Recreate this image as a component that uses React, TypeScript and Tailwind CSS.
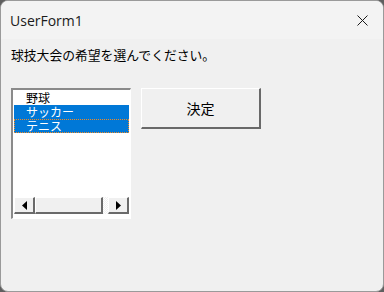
import React from 'react'

const jp = { fontFamily: '"Noto Sans CJK JP", "Noto Sans", sans-serif' }

function Arrow({ dir }: { dir: 'left' | 'right' }) {
  return (
    <svg width="5" height="9" viewBox="0 0 5 9">
      {dir === 'left' ? (
        <path d="M5 0 L0 4.5 L5 9 Z" fill="#000" />
      ) : (
        <path d="M0 0 L5 4.5 L0 9 Z" fill="#000" />
      )}
    </svg>
  )
}

export default function App() {
  const items = ['野球', 'サッカー', 'テニス']
  const selected = [false, true, true]

  return (
    <div className="w-[384px] h-[292px] bg-[#5f5f5f]">
      <div className="w-full h-full rounded-[8px] border border-[#9a9a9a] bg-[#f0f0f0] overflow-hidden flex flex-col">
        {/* title bar */}
        <div className="h-[38px] shrink-0 bg-[#f3f3f3] flex items-center justify-between pl-[9px] pr-[12px]">
          <span className="text-[14px] text-[#1a1a1a]" style={{ fontFamily: '"Open Sans", "Noto Sans", sans-serif' }}>
            UserForm1
          </span>
          <svg width="11" height="11" viewBox="0 0 11 11" className="mr-[3px]">
            <path d="M0.5 0.5 L10.5 10.5 M10.5 0.5 L0.5 10.5" stroke="#1a1a1a" strokeWidth="1" />
          </svg>
        </div>

        {/* body */}
        <div className="flex-1 px-[10px]">
          <p className="mt-[8px] text-[12.8px] leading-[16px] text-[#000]" style={jp}>
            球技大会の希望を選んでください。
          </p>

          <div className="mt-[25px] flex items-start">
            {/* listbox */}
            <div className="w-[120px] h-[131px] border-t-2 border-l-2 border-b border-r border-t-[#8a8a8a] border-l-[#8a8a8a] border-b-white border-r-white bg-white flex flex-col px-[1px] pt-[1px] pb-[4px]">
              <div className="flex-1">
                {items.map((it, i) => (
                  <div
                    key={it}
                    className={[
                      'h-[14px] flex items-center pl-[12px]',
                      selected[i] ? 'bg-[#0078d7] text-white' : 'text-black',
                      i === 2 ? 'outline outline-1 outline-dotted outline-[#f08a24] -outline-offset-1' : '',
                    ].join(' ')}
                  >
                    <span className="text-[12px] leading-none" style={jp}>
                      {it}
                    </span>
                  </div>
                ))}
              </div>
              {/* horizontal scrollbar */}
              <div className="h-[17px] flex bg-[repeating-conic-gradient(#f0f0f0_0_25%,#ffffff_0_50%)] bg-[length:2px_2px]">
                <div className="w-[21px] bg-[#f0f0f0] border-r-2 border-b-2 border-r-[#6a6a6a] border-b-[#6a6a6a] border-t border-l border-t-white border-l-white flex items-center justify-center">
                  <Arrow dir="left" />
                </div>
                <div className="w-[68px] bg-[#f0f0f0] border-r-2 border-b-2 border-r-[#6a6a6a] border-b-[#6a6a6a] border-t border-l border-t-white border-l-white" />
                <div className="flex-1" />
                <div className="w-[21px] bg-[#f0f0f0] border-r-2 border-b-2 border-r-[#6a6a6a] border-b-[#6a6a6a] border-t border-l border-t-white border-l-white flex items-center justify-center">
                  <Arrow dir="right" />
                </div>
              </div>
            </div>

            {/* button */}
            <button
              className="ml-[10px] w-[120px] h-[41px] bg-[#f0f0f0] border-t border-l border-t-white border-l-white border-r-2 border-b-2 border-r-[#696969] border-b-[#696969] text-[14px] text-black flex items-center justify-center"
              style={jp}
            >
              決定
            </button>
          </div>
        </div>
      </div>
    </div>
  )
}
